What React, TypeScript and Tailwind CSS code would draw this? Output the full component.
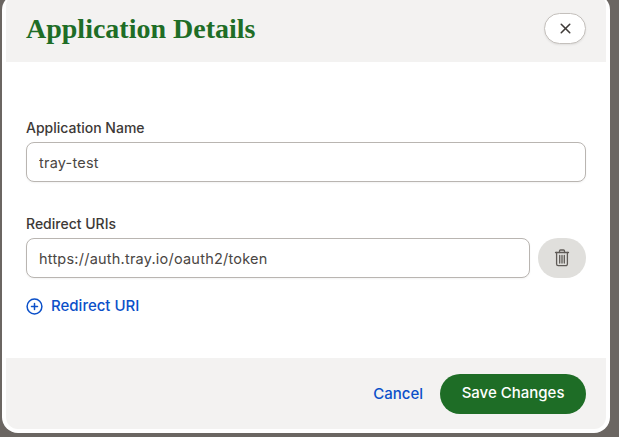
import React from "react";
import { X } from "lucide-react";

function Trash() {
  return (
    <svg width="16" height="18" viewBox="0 0 16 18" fill="none" stroke="#5f5b57" strokeWidth="1.3" strokeLinecap="round" strokeLinejoin="round">
      <path d="M1.5 3.5h13" />
      <path d="M5.5 3.5V2a1 1 0 0 1 1-1h3a1 1 0 0 1 1 1v1.5" />
      <path d="M2.6 3.5v11.6a1.6 1.6 0 0 0 1.6 1.6h7.6a1.6 1.6 0 0 0 1.6-1.6V3.5" />
      <path d="M5.7 6.5v7.5M8 6.5v7.5M10.3 6.5v7.5" />
    </svg>
  );
}

function PlusCircle() {
  return (
    <svg width="17" height="17" viewBox="0 0 17 17" fill="none" stroke="#0b50c9" strokeWidth="1.5" strokeLinecap="round">
      <circle cx="8.5" cy="8.5" r="7.4" />
      <path d="M8.5 5.5v6M5.5 8.5h6" />
    </svg>
  );
}

const inputCls =
  "h-10 rounded-lg border border-[#b9b5b1] bg-white px-3 text-[14.5px] tracking-[0.22px] text-[#4a4643] shadow-[0_1px_2px_rgba(0,0,0,0.05)] outline-none";

export default function App() {
  return (
    <div className="h-[437px] w-[619px] overflow-hidden bg-[#6b6662] pl-[2px] pr-[9px] font-['Inter',sans-serif]">
      <div className="-mt-[6px] flex h-[439px] flex-col rounded-[16px] bg-white px-1 pb-1">
        <header className="flex h-[68px] shrink-0 items-center justify-between rounded-t-[12px] bg-[#f3f2f1] pl-5 pr-5 pt-[1px]">
          <h1 className="font-['Liberation_Serif',serif] text-[28px] font-bold leading-8 text-[#1e6d26]">Application Details</h1>
          <button className="flex h-[31px] w-[42px] items-center justify-center rounded-full border border-[#c4c0bc] bg-white shadow-[0_1px_2px_rgba(0,0,0,0.08)]">
            <X size={17} strokeWidth={2.2} color="#3f3b38" />
          </button>
        </header>
        <main className="flex flex-1 flex-col px-5 pt-[56px]">
          <label className="mb-1 text-[14px] font-medium leading-5 text-[#3d3936]">Application Name</label>
          <input className={inputCls} defaultValue="tray-test" />
          <label className="mb-1 mt-8 text-[14px] font-medium leading-5 text-[#3d3936]">Redirect URIs</label>
          <div className="flex gap-2">
            <input className={`${inputCls} min-w-0 flex-1`} defaultValue="https://auth.tray.io/oauth2/token" />
            <button className="flex h-10 w-12 shrink-0 items-center justify-center rounded-full bg-[#e0dfdc]">
              <Trash />
            </button>
          </div>
          <button className="mt-[18px] flex items-center gap-2 self-start text-[15px] font-medium leading-5 text-[#0b50c9]">
            <PlusCircle />
            Redirect URI
          </button>
        </main>
        <footer className="flex h-[71px] shrink-0 items-center justify-end gap-[17px] rounded-b-[12px] bg-[#f3f2f1] pr-5">
          <button className="pt-px text-[15px] font-medium text-[#0b50c9]">Cancel</button>
          <button className="h-10 rounded-full bg-[#1e6d26] px-[21.5px] text-[15px] font-medium text-white">Save Changes</button>
        </footer>
      </div>
    </div>
  );
}
